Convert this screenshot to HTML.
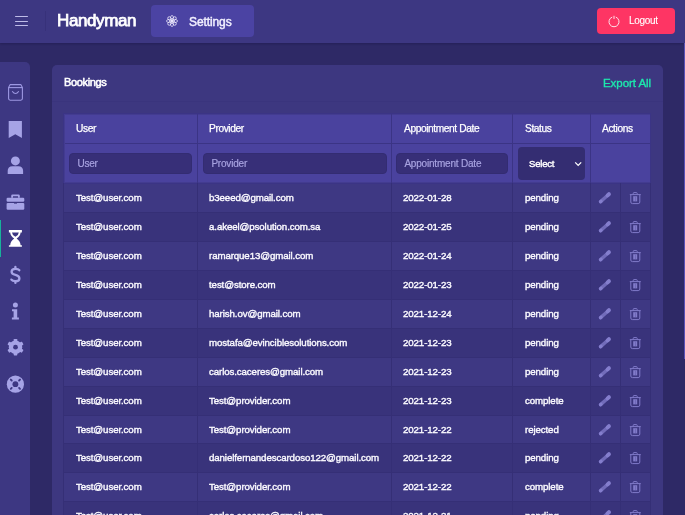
<!DOCTYPE html>
<html><head><meta charset="utf-8">
<style>
*{box-sizing:border-box;margin:0;padding:0}
html,body{width:685px;height:515px;overflow:hidden;background:#2e2966;font-family:"Liberation Sans",sans-serif;color:#fff}
.abs{position:absolute}
#nav{left:0;top:0;width:685px;height:43px;background:#3d3782;box-shadow:0 1px 2px rgba(20,15,60,.35)}
.ham{left:14.6px;width:13.8px;height:1.3px;background:#bfbce8;border-radius:0.6px}
#divider{left:45px;top:11px;width:1px;height:20px;background:#37317a}
#brand{will-change:transform;left:57.3px;top:10.5px;font-size:17px;font-weight:normal;letter-spacing:-0.4px;-webkit-text-stroke:0.75px #fff;color:#fff}
#settings{left:151px;top:5px;width:103px;height:32px;background:#4b43a3;border-radius:4px}
#settings span{will-change:transform;position:absolute;left:38px;top:9.5px;font-size:12px;color:#f2f0ff;letter-spacing:-0.1px;-webkit-text-stroke:0.45px #f2f0ff}
#logout{left:597px;top:8px;width:78px;height:26px;background:#fe3564;border-radius:4px}
#logout span{will-change:transform;position:absolute;left:32.2px;top:7px;font-size:10px;color:#fff;letter-spacing:-0.3px;-webkit-text-stroke:0.1px #fff}
#side{left:0;top:61.5px;width:30px;height:460px;background:#3d3782;border-top-right-radius:5px}
#activebar{left:0;top:220.3px;width:1.4px;height:36.4px;background:#17b39b}
#strip{left:684px;top:43px;width:1px;height:316px;background:#5a51b6}
#card{left:52px;top:65px;width:611px;height:460px;background:#3d3780;border-radius:5px}
#cardsep{left:52px;top:101px;width:611px;height:1px;background:#3a347d}
#bookings{will-change:transform;left:63.5px;top:76.4px;font-size:11px;font-weight:normal;letter-spacing:-0.35px;-webkit-text-stroke:0.55px #fff;color:#fff}
#export{left:602.5px;top:76.9px;font-size:11.5px;font-weight:normal;letter-spacing:-0.05px;will-change:transform;-webkit-text-stroke:0.35px #1de8ad;color:#1de8ad}
svg{display:block}

.ln{position:absolute;background:#3b3485}
.rl{position:absolute;background:#352f76}
.inp{position:absolute;top:153px;height:21px;background:#372f78;border:1px solid #332c72;border-radius:4px;font-size:10px;color:#a7a2e0;padding-left:7.4px;padding-top:0px;line-height:19px;white-space:nowrap;overflow:hidden;letter-spacing:-0.2px;-webkit-text-stroke:0.2px #a7a2e0;will-change:transform}
.sel{position:absolute;left:518px;top:147.3px;width:67px;height:32.6px;background:#342d72;border-radius:4px}
.th{position:absolute;top:123px;will-change:transform;font-size:10.2px;color:#fff;letter-spacing:-0.4px;-webkit-text-stroke:0.25px #fff;white-space:nowrap}
.td{position:absolute;font-size:9.7px;color:#fbfaff;letter-spacing:-0.1px;-webkit-text-stroke:0.38px #fbfaff;white-space:nowrap;will-change:transform}
</style></head>
<body>
<div id="nav" class="abs"></div>
<div class="abs ham" style="top:16.2px"></div>
<div class="abs ham" style="top:20.6px"></div>
<div class="abs ham" style="top:25px"></div>
<div id="divider" class="abs"></div>
<div id="brand" class="abs">Handyman</div>
<div id="settings" class="abs">
  <svg class="abs" style="left:13.85px;top:9px" width="14" height="14" viewBox="-7 -7 14 14"><g fill="none" stroke="#e8e5fa" stroke-width="0.8"><ellipse cx="0" cy="-2.75" rx="1.6" ry="2.75" transform="rotate(0)"/><ellipse cx="0" cy="-2.75" rx="1.6" ry="2.75" transform="rotate(45)"/><ellipse cx="0" cy="-2.75" rx="1.6" ry="2.75" transform="rotate(90)"/><ellipse cx="0" cy="-2.75" rx="1.6" ry="2.75" transform="rotate(135)"/><ellipse cx="0" cy="-2.75" rx="1.6" ry="2.75" transform="rotate(180)"/><ellipse cx="0" cy="-2.75" rx="1.6" ry="2.75" transform="rotate(225)"/><ellipse cx="0" cy="-2.75" rx="1.6" ry="2.75" transform="rotate(270)"/><ellipse cx="0" cy="-2.75" rx="1.6" ry="2.75" transform="rotate(315)"/></g></svg>
  <span>Settings</span>
</div>
<div id="logout" class="abs">
  <svg class="abs" style="left:10px;top:6.3px" width="14" height="14" viewBox="0 0 14 14" fill="none" stroke="#fde3ea" stroke-width="1"><path d="M5.2 3.1 A5 5 0 1 0 8.8 3.1"/><path d="M7 2.2 V4.6" stroke-linecap="round"/></svg>
  <span>Logout</span>
</div>
<div id="side" class="abs"></div>
<div id="activebar" class="abs"></div>
<svg class="abs" style="left:0;top:0" width="30" height="400" viewBox="0 0 30 400">
  <g fill="none" stroke="#9d98e2" stroke-width="1.1" stroke-linejoin="round">
    <path d="M10.2 84.6 H20.8 L22.4 87.4 V98.6 Q22.4 100.2 20.8 100.2 H10.2 Q8.6 100.2 8.6 98.6 V87.4 Z"/>
    <path d="M8.6 87.6 H22.4"/>
    <path d="M12.2 91.2 Q15.5 95.8 18.8 91.2"/>
  </g>
  <path d="M8.7 121 H21.9 V138 L15.3 134.2 L8.7 138 Z" fill="#a6a3e6"/>
  <circle cx="15.4" cy="160.9" r="4.5" fill="#a6a3e6"/>
  <path d="M7.7 174 V171 Q7.7 166.2 12.5 166.2 H18.3 Q23.1 166.2 23.1 171 V174 Z" fill="#a6a3e6"/>
  <path d="M11.2 197.7 V195.8 Q11.2 194.4 12.6 194.4 H18.4 Q19.8 194.4 19.8 195.8 V197.7 H18 V196.2 H13 V197.7 Z" fill="#a6a3e6"/>
  <rect x="6.6" y="197.7" width="17.7" height="4.1" rx="1.2" fill="#a6a3e6"/>
  <rect x="6.6" y="202.9" width="17.7" height="6.8" rx="1.2" fill="#a6a3e6"/>
  <rect x="14" y="202" width="3" height="1.6" fill="#3d3782"/>
  <path d="M8.9 230 H21.9 V232.5 H20.6 Q20.4 236 16.6 238.4 Q20.4 241 20.6 245.2 H21.9 V246.8 H8.9 V245.2 H10.2 Q10.4 241 14.2 238.4 Q10.4 236 10.2 232.5 H8.9 Z M12 232.5 Q12.3 235.5 15.4 236.8 Q18.5 235.5 18.8 232.5 Z" fill="#ffffff" fill-rule="evenodd"/>
  <g fill="none" stroke="#a6a3e6" stroke-width="2.3" stroke-linecap="round">
    <path d="M19.3 270.2 Q18.4 268.8 15.4 268.8 Q11.6 268.8 11.6 271.8 Q11.6 274.1 15.4 274.9 Q19.4 275.8 19.4 278.4 Q19.4 281.2 15.4 281.2 Q12.4 281.2 11.4 279.6"/>
    <path d="M15.4 267 V268.6 M15.4 281.4 V282.9"/>
  </g>
  <circle cx="15.4" cy="305" r="2.5" fill="#a6a3e6"/>
  <path d="M12 309.2 H17.2 V317.6 H18.9 V319.6 H11.9 V317.6 H13.6 V311.2 H12 Z" fill="#a6a3e6"/>
  <g transform="translate(15.5 347.2)" fill="#a6a3e6"><circle r="6.7"/><rect x="-1.8" y="-8.3" width="3.6" height="4" rx="0.7" transform="rotate(0)"/><rect x="-1.8" y="-8.3" width="3.6" height="4" rx="0.7" transform="rotate(60)"/><rect x="-1.8" y="-8.3" width="3.6" height="4" rx="0.7" transform="rotate(120)"/><rect x="-1.8" y="-8.3" width="3.6" height="4" rx="0.7" transform="rotate(180)"/><rect x="-1.8" y="-8.3" width="3.6" height="4" rx="0.7" transform="rotate(240)"/><rect x="-1.8" y="-8.3" width="3.6" height="4" rx="0.7" transform="rotate(300)"/></g><circle cx="15.5" cy="347.2" r="2.4" fill="#3d3782"/>
  <g transform="translate(15.4 384.2)">
    <circle r="8.6" fill="#a6a3e6"/>
    <circle r="2.9" fill="#3d3782"/>
    <g stroke="#3d3782" stroke-width="1.9" stroke-linecap="round"><path d="M-3.7 -3.7 L-4.6 -4.6 M3.7 -3.7 L4.6 -4.6 M-3.7 3.7 L-4.6 4.6 M3.7 3.7 L4.6 4.6"/></g>
  </g>
</svg>
<div id="strip" class="abs"></div>
<div id="card" class="abs"></div>
<div id="cardsep" class="abs"></div>
<div id="bookings" class="abs">Bookings</div>
<div id="export" class="abs">Export All</div>

<div class="abs" style="left:63px;top:113px;width:588px;height:71px;background:#4a429e"></div>
<div class="abs" style="left:63px;top:183px;width:588px;height:29px;background:#3e3883"></div>
<div class="abs" style="left:63px;top:212px;width:588px;height:29px;background:#39337b"></div>
<div class="abs" style="left:63px;top:241px;width:588px;height:29px;background:#3e3883"></div>
<div class="abs" style="left:63px;top:270px;width:588px;height:29px;background:#39337b"></div>
<div class="abs" style="left:63px;top:299px;width:588px;height:29px;background:#3e3883"></div>
<div class="abs" style="left:63px;top:328px;width:588px;height:29px;background:#39337b"></div>
<div class="abs" style="left:63px;top:357px;width:588px;height:29px;background:#3e3883"></div>
<div class="abs" style="left:63px;top:386px;width:588px;height:29px;background:#39337b"></div>
<div class="abs" style="left:63px;top:415px;width:588px;height:28px;background:#3e3883"></div>
<div class="abs" style="left:63px;top:443px;width:588px;height:29px;background:#39337b"></div>
<div class="abs" style="left:63px;top:472px;width:588px;height:29px;background:#3e3883"></div>
<div class="abs" style="left:63px;top:501px;width:588px;height:29px;background:#39337b"></div>
<div class="ln" style="left:63px;top:113px;width:588px;height:1px"></div>
<div class="ln" style="left:63px;top:143px;width:588px;height:1px"></div>
<div class="ln" style="left:63px;top:183px;width:588px;height:1px"></div>
<div class="abs" style="left:64px;top:114px;width:586px;height:1px;background:#433c90"></div>
<div class="abs" style="left:64px;top:182px;width:586px;height:1px;background:#433c90"></div>
<div class="abs" style="left:64px;top:114px;width:1px;height:69px;background:#433c90"></div>
<div class="rl" style="left:63px;top:212px;width:588px;height:1px"></div>
<div class="rl" style="left:63px;top:241px;width:588px;height:1px"></div>
<div class="rl" style="left:63px;top:270px;width:588px;height:1px"></div>
<div class="rl" style="left:63px;top:299px;width:588px;height:1px"></div>
<div class="rl" style="left:63px;top:328px;width:588px;height:1px"></div>
<div class="rl" style="left:63px;top:357px;width:588px;height:1px"></div>
<div class="rl" style="left:63px;top:386px;width:588px;height:1px"></div>
<div class="rl" style="left:63px;top:415px;width:588px;height:1px"></div>
<div class="rl" style="left:63px;top:443px;width:588px;height:1px"></div>
<div class="rl" style="left:63px;top:472px;width:588px;height:1px"></div>
<div class="rl" style="left:63px;top:501px;width:588px;height:1px"></div>
<div class="rl" style="left:63px;top:530px;width:588px;height:1px"></div>
<div class="ln" style="left:63px;top:113px;width:1px;height:70px"></div>
<div class="rl" style="left:63px;top:183px;width:1px;height:332px"></div>
<div class="ln" style="left:197px;top:113px;width:1px;height:70px"></div>
<div class="rl" style="left:197px;top:183px;width:1px;height:332px"></div>
<div class="ln" style="left:391px;top:113px;width:1px;height:70px"></div>
<div class="rl" style="left:391px;top:183px;width:1px;height:332px"></div>
<div class="ln" style="left:512px;top:113px;width:1px;height:70px"></div>
<div class="rl" style="left:512px;top:183px;width:1px;height:332px"></div>
<div class="ln" style="left:590px;top:113px;width:1px;height:70px"></div>
<div class="rl" style="left:590px;top:183px;width:1px;height:332px"></div>
<div class="rl" style="left:620px;top:183px;width:1px;height:332px"></div>
<div class="ln" style="left:650px;top:113px;width:1px;height:70px"></div>
<div class="rl" style="left:650px;top:183px;width:1px;height:332px"></div>
<div class="th" style="left:75.5px">User</div>
<div class="th" style="left:209.3px">Provider</div>
<div class="th" style="left:403.5px">Appointment Date</div>
<div class="th" style="left:524.5px">Status</div>
<div class="th" style="left:602px">Actions</div>
<div class="inp" style="left:69px;width:123px">User</div>
<div class="inp" style="left:202.5px;width:184px">Provider</div>
<div class="inp" style="left:396px;width:111.5px">Appointment Date</div>
<div class="sel"></div>
<div class="td" style="left:528.6px;top:158px;font-size:9.5px;-webkit-text-stroke:0.42px #fff;color:#fff;letter-spacing:-0.2px">Select</div>
<div class="td" style="left:75.8px;top:191.6px">Test@user.com</div>
<div class="td" style="left:209.3px;top:191.6px">b3eeed@gmail.com</div>
<div class="td" style="left:403.3px;top:191.6px">2022-01-28</div>
<div class="td" style="left:524.6px;top:191.6px">pending</div>
<div class="td" style="left:75.8px;top:220.6px">Test@user.com</div>
<div class="td" style="left:209.3px;top:220.6px">a.akeel@psolution.com.sa</div>
<div class="td" style="left:403.3px;top:220.6px">2022-01-25</div>
<div class="td" style="left:524.6px;top:220.6px">pending</div>
<div class="td" style="left:75.8px;top:249.6px">Test@user.com</div>
<div class="td" style="left:209.3px;top:249.6px">ramarque13@gmail.com</div>
<div class="td" style="left:403.3px;top:249.6px">2022-01-24</div>
<div class="td" style="left:524.6px;top:249.6px">pending</div>
<div class="td" style="left:75.8px;top:278.6px">Test@user.com</div>
<div class="td" style="left:209.3px;top:278.6px">test@store.com</div>
<div class="td" style="left:403.3px;top:278.6px">2022-01-23</div>
<div class="td" style="left:524.6px;top:278.6px">pending</div>
<div class="td" style="left:75.8px;top:307.6px">Test@user.com</div>
<div class="td" style="left:209.3px;top:307.6px">harish.ov@gmail.com</div>
<div class="td" style="left:403.3px;top:307.6px">2021-12-24</div>
<div class="td" style="left:524.6px;top:307.6px">pending</div>
<div class="td" style="left:75.8px;top:336.6px">Test@user.com</div>
<div class="td" style="left:209.3px;top:336.6px">mostafa@evinciblesolutions.com</div>
<div class="td" style="left:403.3px;top:336.6px">2021-12-23</div>
<div class="td" style="left:524.6px;top:336.6px">pending</div>
<div class="td" style="left:75.8px;top:365.6px">Test@user.com</div>
<div class="td" style="left:209.3px;top:365.6px">carlos.caceres@gmail.com</div>
<div class="td" style="left:403.3px;top:365.6px">2021-12-23</div>
<div class="td" style="left:524.6px;top:365.6px">pending</div>
<div class="td" style="left:75.8px;top:394.6px">Test@user.com</div>
<div class="td" style="left:209.3px;top:394.6px">Test@provider.com</div>
<div class="td" style="left:403.3px;top:394.6px">2021-12-23</div>
<div class="td" style="left:524.6px;top:394.6px">complete</div>
<div class="td" style="left:75.8px;top:423.6px">Test@user.com</div>
<div class="td" style="left:209.3px;top:423.6px">Test@provider.com</div>
<div class="td" style="left:403.3px;top:423.6px">2021-12-22</div>
<div class="td" style="left:524.6px;top:423.6px">rejected</div>
<div class="td" style="left:75.8px;top:451.6px">Test@user.com</div>
<div class="td" style="left:209.3px;top:451.6px">danielfernandescardoso122@gmail.com</div>
<div class="td" style="left:403.3px;top:451.6px">2021-12-22</div>
<div class="td" style="left:524.6px;top:451.6px">pending</div>
<div class="td" style="left:75.8px;top:480.6px">Test@user.com</div>
<div class="td" style="left:209.3px;top:480.6px">Test@provider.com</div>
<div class="td" style="left:403.3px;top:480.6px">2021-12-22</div>
<div class="td" style="left:524.6px;top:480.6px">complete</div>
<div class="td" style="left:75.8px;top:509.6px">Test@user.com</div>
<div class="td" style="left:209.3px;top:509.6px">carlos.caceres@gmail.com</div>
<div class="td" style="left:403.3px;top:509.6px">2021-12-21</div>
<div class="td" style="left:524.6px;top:509.6px">pending</div>
<svg class="abs" style="left:0;top:0" width="685" height="515" viewBox="0 0 685 515">
<defs>
<g id="pen" stroke-linecap="round"><path d="M600.6 201.6 L607.2 195.8" stroke="#726cba" stroke-width="3.4"/><path d="M607.6 195.4 L608.9 194.2" stroke="#847ecd" stroke-width="4"/><path d="M600.4 201.8 L601.1 201.2" stroke="#847ecd" stroke-width="3.2"/></g>
<g id="trash"><g fill="none" stroke="#817bc9" stroke-width="1"><path d="M629.8 194.6 H640.8"/><path d="M633.2 194.4 V193.4 Q633.2 192.6 634 192.6 H636.4 Q637.2 192.6 637.2 193.4 V194.4"/><path d="M630.8 195 V202 Q630.8 203.6 632.4 203.6 H638.2 Q639.8 203.6 639.8 202 V195"/></g><rect x="633.2" y="196.2" width="4" height="5.2" fill="#817bc9"/><rect x="635" y="196.8" width="0.5" height="4.2" fill="#5c56a6"/></g>
</defs>
<use href="#pen" y="0"/><use href="#trash" y="0"/><use href="#pen" y="29"/><use href="#trash" y="29"/><use href="#pen" y="58"/><use href="#trash" y="58"/><use href="#pen" y="87"/><use href="#trash" y="87"/><use href="#pen" y="116"/><use href="#trash" y="116"/><use href="#pen" y="145"/><use href="#trash" y="145"/><use href="#pen" y="174"/><use href="#trash" y="174"/><use href="#pen" y="203"/><use href="#trash" y="203"/><use href="#pen" y="232"/><use href="#trash" y="232"/><use href="#pen" y="260"/><use href="#trash" y="260"/><use href="#pen" y="289"/><use href="#trash" y="289"/><use href="#pen" y="318"/><use href="#trash" y="318"/>
<path d="M575.2 162.4 L578.2 165.4 L581.2 162.4" fill="none" stroke="#fff" stroke-width="1.3"/>
</svg>
</body></html>
